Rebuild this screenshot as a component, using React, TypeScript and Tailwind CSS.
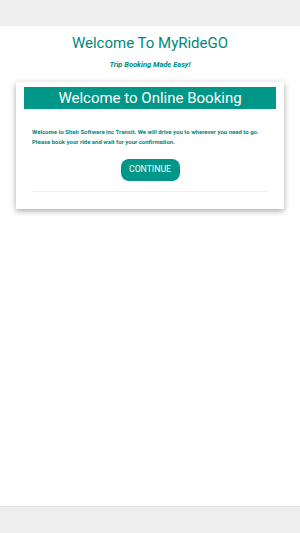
import React from 'react';

export default function App() {
  return (
    <div className="flex h-[533px] w-[300px] flex-col bg-white font-['Roboto','Liberation_Sans',sans-serif]">
      <div className="h-[26px] shrink-0 bg-[#eeeeee]" />
      <main className="flex flex-1 flex-col items-center">
        <h1 className="mt-[6px] text-[15px] leading-[22px] text-[#00897b]">Welcome To MyRideGO</h1>
        <p className="mt-[6px] text-[7.5px] font-bold italic leading-[10px] text-[#00897b]">Trip Booking Made Easy!</p>
        <div className="mt-[12px] w-[268px] bg-white px-2 pb-[17px] pt-[5px] shadow-[0_2px_6px_rgba(0,0,0,0.35)]">
          <div className="flex h-[22px] items-center justify-center bg-[#009688] text-[15px] text-white">
            Welcome to Online Booking
          </div>
          <div className="px-2">
            <p className="mt-[18px] text-[6px] font-bold leading-[10px] text-[#00897b]">
              Welcome to Shah Software inc Transit. We will drive you to wherever you need to go.
              <br />
              Please book your ride and wait for your confirmation.
            </p>
            <div className="mt-[12px] flex justify-center">
              <button className="h-[22px] w-[59px] rounded-[8px] bg-[#009688] text-[8.7px] text-white">CONTINUE</button>
            </div>
            <div className="mt-[10px] border-t border-[#f0f0f0]" />
          </div>
        </div>
      </main>
      <div className="h-[27px] shrink-0 border-t border-[#e6e6e6] bg-[#eeeeee]" />
    </div>
  );
}
